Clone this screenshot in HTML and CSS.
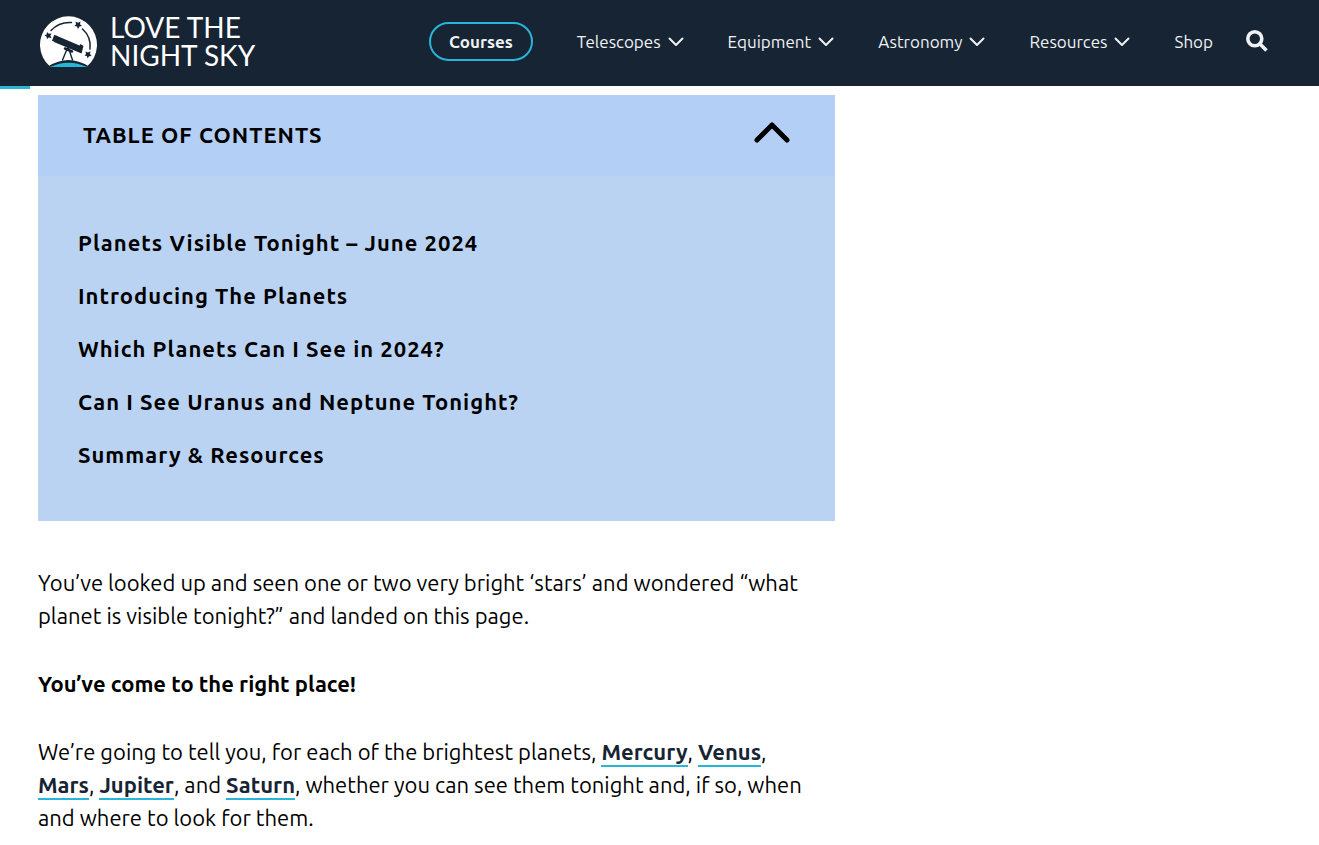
FILE: index.html
```html
<!DOCTYPE html>
<html lang="en">
<head>
<meta charset="utf-8">
<meta name="viewport" content="width=device-width, initial-scale=1">
<title>Planets Visible Tonight - Love the Night Sky</title>
<link rel="stylesheet" href="styles.css">
</head>
<body>
<header class="site-header">
  <a class="logo" href="#">
    <svg class="logo-mark" viewBox="0 0 58 52" aria-hidden="true">
      <path fill="#fff" d="M10 50.500A28.500 28.500 0 1 1 47 50.500Q28.500 40 10 50.500Z"/>
      <path fill="#172433" d="M8 50.500Q28.500 37.500 49 50.500Z"/>
      <path fill="#27b5d8" d="M10 51Q28.500 42.500 47 51Z"/>
      <g fill="#172433">
        <path d="M16 19.500L39.500 29.500 40.500 28 43.500 30 41.500 37.500 14 26Z"/>
        <path d="M14.300 18.800L17.500 20.200 15 26 12 24.800Z"/>
        <path d="M7 16L8.800 17.800 11.500 17.500 10.300 19.700 11.500 22 8.800 21.500 7 23 6.500 20.500 4.500 19.300 6.600 18.400Z"/>
        <path d="M35.500 5.500L38 6.800 40.500 5.500 40 8.300 42 10 39.500 10.500 38 13 37 10.500 34.500 10 36 8.300Z"/>
        <path d="M45.500 35.500L48 36.500 50.500 35.300 50 38 51.500 40 49 40.200 47.700 42.500 46.800 40 44.500 39.500 46 38Z"/>
      </g>
      <g fill="none" stroke="#172433" stroke-linecap="round">
        <path stroke-width="1.500" d="M11 14.500C16 9 23 6 31.500 6.500M42.500 13C48 18 51 25 50 33"/>
        <path stroke-width="1.400" d="M27.500 32L22.500 44M28.500 32L32.500 44"/>
        <path stroke-width="2.500" d="M25 32.500L32 35.500"/>
      </g>
    </svg>
    <span class="logo-text">LOVE THE<br>NIGHT SKY</span>
  </a>
  <nav class="nav" aria-label="Main">
    <a class="nav-pill" href="#">Courses</a>
    <a class="nav-link" href="#">Telescopes<svg class="caret" viewBox="0 0 16 10" aria-hidden="true"><path d="M1.500 1.500L8 8 14.500 1.500"/></svg></a>
    <a class="nav-link" href="#">Equipment<svg class="caret" viewBox="0 0 16 10" aria-hidden="true"><path d="M1.500 1.500L8 8 14.500 1.500"/></svg></a>
    <a class="nav-link" href="#">Astronomy<svg class="caret" viewBox="0 0 16 10" aria-hidden="true"><path d="M1.500 1.500L8 8 14.500 1.500"/></svg></a>
    <a class="nav-link" href="#">Resources<svg class="caret" viewBox="0 0 16 10" aria-hidden="true"><path d="M1.500 1.500L8 8 14.500 1.500"/></svg></a>
    <a class="nav-link" href="#">Shop</a>
    <button class="search" type="button" aria-label="Search">
      <svg class="search-icon" viewBox="0 0 22 22" aria-hidden="true"><circle cx="8.800" cy="8.800" r="7"/><path d="M14 14L20.500 20.500"/></svg>
    </button>
  </nav>
</header>
<div class="progress"><div class="progress-bar" style="width: 2.3%"></div></div>
<main class="article">
  <section class="toc">
    <button class="toc-header" type="button" aria-expanded="true" aria-controls="toc-list">
      <span>TABLE OF CONTENTS</span>
      <svg class="toc-arrow" viewBox="0 0 36 22" aria-hidden="true"><path d="M3 18L18 3 33 18"/></svg>
    </button>
    <ul class="toc-list" id="toc-list">
      <li><a class="toc-link" href="#">Planets Visible Tonight – June 2024</a></li>
      <li><a class="toc-link" href="#">Introducing The Planets</a></li>
      <li><a class="toc-link" href="#">Which Planets Can I See in 2024?</a></li>
      <li><a class="toc-link" href="#">Can I See Uranus and Neptune Tonight?</a></li>
      <li><a class="toc-link" href="#">Summary &amp; Resources</a></li>
    </ul>
  </section>
  <div class="prose">
    <p>You’ve looked up and seen one or two very bright ‘stars’ and wondered “what planet is visible tonight?” and landed on this page.</p>
    <p><strong>You’ve come to the right place!</strong></p>
    <p>We’re going to tell you, for each of the brightest planets, <a class="link" href="#">Mercury</a>, <a class="link" href="#">Venus</a>, <a class="link" href="#">Mars</a>, <a class="link" href="#">Jupiter</a>, and <a class="link" href="#">Saturn</a>, whether you can see them tonight and, if so, when and where to look for them.</p>
  </div>
</main>
</body>
</html>
```

FILE: styles.css
```css
* {
  box-sizing: border-box;
}

body {
  margin: 0;
  background: #fff;
  color: #000;
  font-family: Ubuntu, "Noto Sans", "Open Sans", sans-serif;
  font-size: 22px;
  line-height: 33px;
}

.site-header {
  display: flex;
  align-items: center;
  justify-content: space-between;
  height: 86px;
  padding: 0 51px 3px 40px;
  background: #172433;
}

.logo {
  display: flex;
  align-items: center;
  gap: 12px;
  color: #fff;
  text-decoration: none;
}

.logo-mark {
  width: 58px;
  height: 52px;
}

.logo-text {
  padding-bottom: 1px;
  font-family: Lato, sans-serif;
  font-size: 28px;
  line-height: 28px;
  white-space: nowrap;
}

.nav {
  display: flex;
  align-items: center;
  gap: 44px;
  font-size: 17px;
  line-height: 23px;
}

.nav-link,
.nav-pill {
  display: flex;
  align-items: center;
  gap: 7px;
  color: #eff1f3;
  text-decoration: none;
}

.nav-pill {
  padding: 6px 18px;
  border: 2px solid #27b5d8;
  border-radius: 20px;
  font-weight: 700;
}

.caret {
  width: 16px;
  height: 10px;
  fill: none;
  stroke: #eff1f3;
  stroke-width: 2;
  stroke-linecap: round;
  stroke-linejoin: round;
}

.search {
  display: flex;
  margin-left: -11px;
  padding: 0;
  border: 0;
  background: none;
}

.search-icon {
  width: 22px;
  height: 22px;
  margin-bottom: 2px;
  fill: none;
  stroke: #eff1f3;
  stroke-width: 3.6;
}

.progress-bar {
  height: 3px;
  background: #27b5d8;
}

.article {
  max-width: 873px;
  padding: 6px 38px 0;
}

.toc {
  background: #bad3f3;
  font-weight: 700;
  letter-spacing: 1px;
}

.toc-header {
  display: flex;
  align-items: center;
  justify-content: space-between;
  width: 100%;
  padding: 23px 45px 25px;
  border: 0;
  background: #b4cff5;
  color: #000;
  font: inherit;
  letter-spacing: inherit;
}

.toc-arrow {
  width: 36px;
  height: 22px;
  margin-bottom: 4px;
  fill: none;
  stroke: #000;
  stroke-width: 5;
  stroke-linecap: round;
  stroke-linejoin: round;
}

.toc-list {
  display: grid;
  gap: 20px;
  margin: 0;
  padding: 50px 40px;
  list-style: none;
}

.toc-link {
  color: #000;
  text-decoration: none;
}

.prose {
  display: grid;
  gap: 35px;
  padding: 45px 12px 0 0;
}

.prose p {
  margin: 0;
}

.link {
  padding-bottom: 1px;
  border-bottom: 2px solid #27b5d8;
  color: #172433;
  font-weight: 700;
  text-decoration: none;
}
```
